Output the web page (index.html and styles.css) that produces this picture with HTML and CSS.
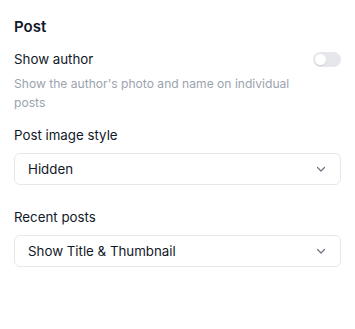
FILE: index.html
```html
<!DOCTYPE html>
<html lang="en">
<head>
  <meta charset="UTF-8">
  <meta name="viewport" content="width=device-width, initial-scale=1.0">
  <title>Post settings</title>
  <link rel="stylesheet" href="styles.css">
</head>
<body>
  <div class="panel">
    <h2 class="panel-title">Post</h2>

    <div class="setting setting-toggle">
      <div class="setting-row">
        <span class="setting-label">Show author</span>
        <span class="toggle"><span class="knob"></span></span>
      </div>
      <p class="setting-help">Show the author's photo and name on individual posts</p>
    </div>

    <div class="setting">
      <div class="setting-label">Post image style</div>
      <div class="select">
        <span>Hidden</span>
        <svg class="chevron" width="12" height="12" viewBox="0 0 12 12" fill="none">
          <path d="M2.5 4.5 L6 8 L9.5 4.5" stroke="#6b7280" stroke-width="1.2" stroke-linecap="round" stroke-linejoin="round"/>
        </svg>
      </div>
    </div>

    <div class="setting">
      <div class="setting-label">Recent posts</div>
      <div class="select">
        <span>Show Title &amp; Thumbnail</span>
        <svg class="chevron" width="12" height="12" viewBox="0 0 12 12" fill="none">
          <path d="M2.5 4.5 L6 8 L9.5 4.5" stroke="#6b7280" stroke-width="1.2" stroke-linecap="round" stroke-linejoin="round"/>
        </svg>
      </div>
    </div>
  </div>
</body>
</html>
```

FILE: styles.css
```css
body {
  margin: 0;
  font-family: 'Inter', sans-serif;
  background: #fff;
  color: #111827;
}

.panel {
  padding: 17px 14px 0 14px;
}

.panel-title {
  margin: 0 0 12px;
  font-size: 15px;
  font-weight: 600;
  line-height: 20px;
}

.setting {
  margin-bottom: 22px;
}

.setting-toggle {
  margin-bottom: 13px;
}

.setting-row {
  display: flex;
  align-items: center;
  justify-content: space-between;
}

.setting-label {
  font-size: 13.3px;
  line-height: 20px;
  margin-bottom: 8px;
}

.setting-row .setting-label {
  margin-bottom: 0;
}

.setting-help {
  margin: 5px 0 0;
  font-size: 12.1px;
  line-height: 19px;
  color: #9ca3af;
  max-width: 300px;
}

.toggle {
  width: 28px;
  height: 15px;
  border-radius: 8px;
  background: #e5e7eb;
  display: flex;
  align-items: center;
  padding: 0 2px;
  box-sizing: border-box;
}

.knob {
  width: 11px;
  height: 11px;
  border-radius: 50%;
  background: #fff;
  box-shadow: 0 1px 1px rgba(0,0,0,0.1);
}

.select {
  height: 32px;
  border: 1px solid #e5e7eb;
  border-radius: 6px;
  box-sizing: border-box;
  display: flex;
  align-items: center;
  justify-content: space-between;
  padding: 0 13px;
  font-size: 13.3px;
}
```
